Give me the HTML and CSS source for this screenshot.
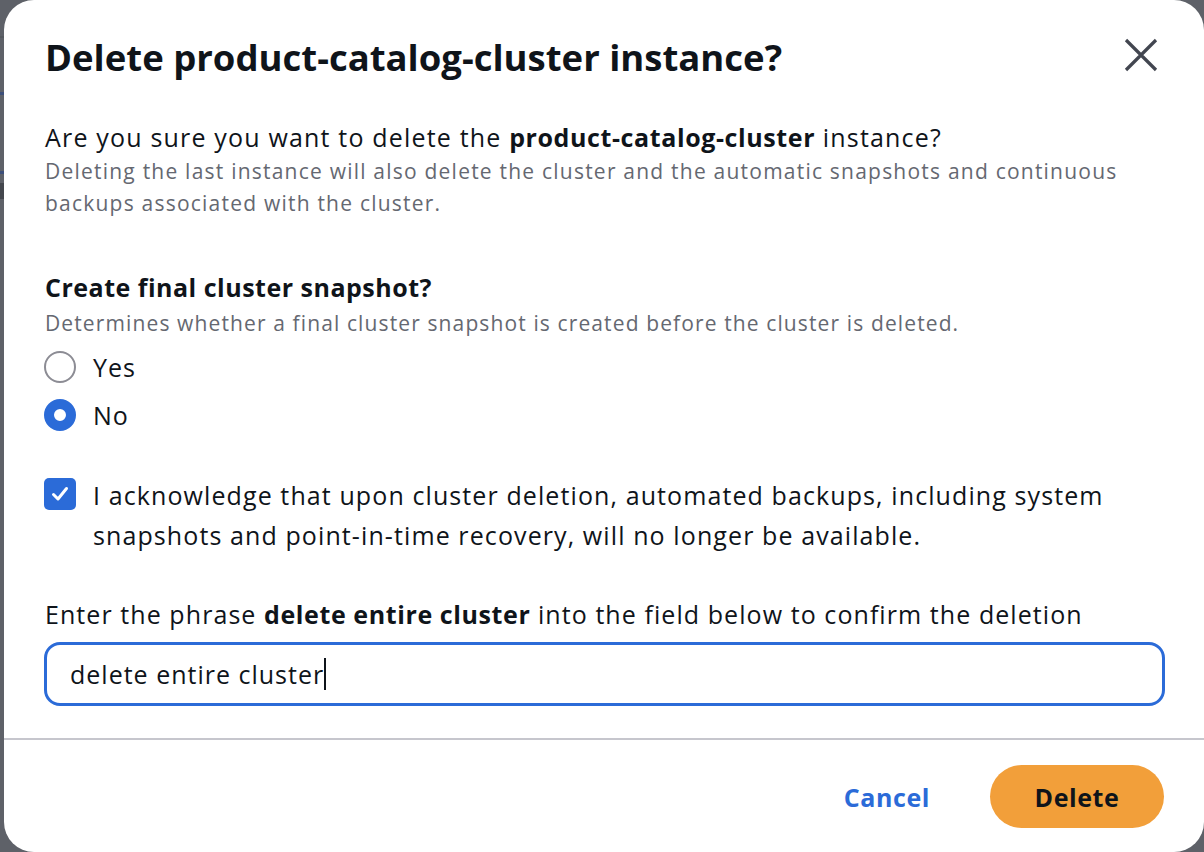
FILE: index.html
```html
<!DOCTYPE html>
<html lang="en">
<head>
<meta charset="utf-8">
<title>Delete instance</title>
<link rel="stylesheet" href="styles.css">
</head>
<body>
<div class="modal" role="dialog">
  <header class="head">
    <h1 class="title">Delete product-catalog-cluster instance?</h1>
    <button class="close" aria-label="Close">
      <svg width="34" height="34" viewBox="0 0 34 34"><path d="M2 2 L32 32 M32 2 L2 32" stroke="#424650" stroke-width="3.2" fill="none"/></svg>
    </button>
  </header>
  <div class="content">
    <p class="lead">Are you sure you want to delete the <b>product-catalog-cluster</b> instance?</p>
    <p class="hint">Deleting the last instance will also delete the cluster and the automatic snapshots and continuous backups associated with the cluster.</p>

    <div class="field">
      <div class="label">Create final cluster snapshot?</div>
      <div class="desc">Determines whether a final cluster snapshot is created before the cluster is deleted.</div>
      <div class="radios">
        <div class="radio"><span class="rb"></span><span>Yes</span></div>
        <div class="radio on"><span class="rb"></span><span>No</span></div>
      </div>
    </div>

    <div class="check">
      <span class="cb"><svg width="20" height="20" viewBox="0 0 20 20"><path d="M3.5 10.5 L8 15 L16.5 4.5" stroke="#fff" stroke-width="3" fill="none" stroke-linecap="round" stroke-linejoin="round"/></svg></span>
      <span class="check-text">I acknowledge that upon cluster deletion, automated backups, including system snapshots and point-in-time recovery, will no longer be available.</span>
    </div>

    <div class="confirm">Enter the phrase <b>delete entire cluster</b> into the field below to confirm the deletion</div>
    <div class="input">delete entire cluster<span class="caret"></span></div>
  </div>
  <footer class="foot">
    <button class="link">Cancel</button>
    <button class="primary">Delete</button>
  </footer>
</div>
</body>
</html>
```

FILE: styles.css
```css
html, body {
  margin: 0;
  height: 100%;
}
body {
  background-color: #5e6168;
  background-image:
    linear-gradient(to bottom,
      transparent 0, transparent 36px,
      #55595f 36px, #55595f 38px,
      transparent 38px, transparent 92px,
      #3d4f7a 92px, #3d4f7a 95px,
      transparent 95px, transparent 171px,
      #3d4f7a 171px, #3d4f7a 174px,
      transparent 174px, transparent 183px,
      #44474d 183px, #44474d 199px,
      transparent 199px);
  font-family: "Open Sans", "Noto Sans", "Liberation Sans", sans-serif;
  color: #0f141a;
  overflow: hidden;
}
.modal {
  margin-left: 4px;
  width: 1200px;
  height: 852px;
  background: #fff;
  border-radius: 30px;
  box-sizing: border-box;
  display: flex;
  flex-direction: column;
}
.head {
  display: flex;
  justify-content: space-between;
  align-items: flex-start;
  padding: 37px 46px 0 41px;
}
.title {
  margin: 0;
  font-size: 36.5px;
  line-height: 40px;
  font-weight: 700;
}
.close {
  border: 0;
  background: none;
  padding: 0;
  margin-top: 1px;
  width: 34px;
  height: 34px;
  display: flex;
}
.content {
  padding: 44px 39px 0 40px;
}
.lead {
  margin: 0 0 0 1px;
  font-size: 25px;
  line-height: 32px;
  letter-spacing: 1.18px;
}
.lead b, .confirm b {
  font-weight: 700;
  letter-spacing: 0.6px;
}
.hint {
  margin: 2px 0 0 1px;
  font-size: 21px;
  line-height: 32px;
  letter-spacing: 1.22px;
  color: #656871;
  max-width: 1100px;
}
.field {
  margin-top: 52px;
}
.label {
  margin-left: 1px;
  font-size: 25px;
  line-height: 32px;
  font-weight: 700;
  letter-spacing: 0.5px;
}
.desc {
  margin: 4px 0 0 1px;
  font-size: 21px;
  line-height: 32px;
  letter-spacing: 1.12px;
  color: #656871;
}
.radios {
  margin-top: 4px;
  display: flex;
  flex-direction: column;
}
.radio {
  display: flex;
  align-items: center;
  height: 48px;
  gap: 17px;
  font-size: 25px;
  letter-spacing: 1px;
}
.rb {
  width: 32px;
  height: 32px;
  box-sizing: border-box;
  border-radius: 50%;
  border: 2.5px solid #8c8c94;
  background: #fff;
}
.radio.on .rb {
  border: 10px solid #2b6bd8;
}
.check {
  margin-top: 36px;
  display: flex;
  gap: 17px;
  align-items: flex-start;
}
.cb {
  flex: none;
  width: 32px;
  height: 32px;
  margin-top: 3px;
  background: #2b6bd8;
  border-radius: 5px;
  display: flex;
  align-items: center;
  justify-content: center;
}
.check-text {
  font-size: 25px;
  line-height: 40px;
  letter-spacing: 1.1px;
  max-width: 1040px;
}
.confirm {
  margin: 43px 0 0 1px;
  font-size: 25px;
  line-height: 32px;
  letter-spacing: 1.07px;
}
.input {
  margin-top: 12px;
  height: 64px;
  box-sizing: border-box;
  border: 3px solid #2b6bd8;
  border-radius: 16px;
  padding: 0 23px;
  font-size: 25px;
  letter-spacing: 1px;
  display: flex;
  align-items: center;
}
.caret {
  display: inline-block;
  width: 2px;
  height: 32px;
  background: #0f141a;
}
.foot {
  margin-top: 32px;
  border-top: 2px solid #c6c6cd;
  display: flex;
  justify-content: flex-end;
  align-items: center;
  padding: 25px 40px 0 0;
  gap: 30px;
}
.link {
  border: 0;
  background: none;
  font-family: inherit;
  font-size: 25px;
  font-weight: 700;
  letter-spacing: 0.6px;
  color: #2b6bd8;
  padding: 0 30px;
  height: 63px;
}
.primary {
  border: 0;
  background: #f29f3a;
  color: #0f141a;
  font-family: inherit;
  font-size: 25px;
  font-weight: 700;
  letter-spacing: 0.6px;
  height: 63px;
  width: 174px;
  border-radius: 32px;
}
```
